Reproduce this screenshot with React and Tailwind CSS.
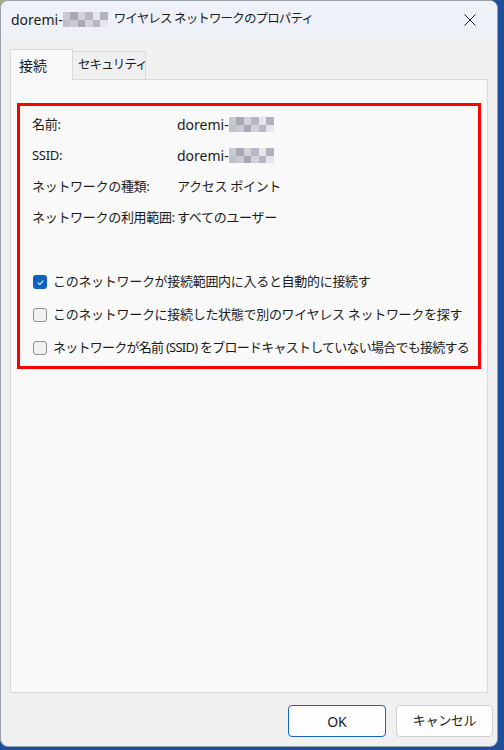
import React from "react";

const font = { fontFamily: '"Noto Sans", "Noto Sans CJK JP", sans-serif' };

// Pixelated mosaic hiding part of the network name
function Mosaic({ cols = 6, rows = 2, cell = 7 }) {
  const shades = ["#c9c9cf", "#b8b8c4", "#dcdce0", "#a9a9b6", "#e6e6ea", "#bfc0c8", "#d2d2d8", "#b0b2bc"];
  const cells = [];
  for (let r = 0; r < rows; r++) {
    for (let c = 0; c < cols; c++) {
      cells.push(
        <div key={`${r}-${c}`} style={{ background: shades[(r * 5 + c * 3) % shades.length] }} />
      );
    }
  }
  return (
    <div
      className="inline-grid align-middle"
      style={{ gridTemplateColumns: `repeat(${cols}, ${cell}px)`, gridTemplateRows: `repeat(${rows}, ${cell}px)` }}
    >
      {cells}
    </div>
  );
}

function Checkbox({ checked }) {
  if (checked) {
    return (
      <div className="w-[14px] h-[14px] rounded-[3px] bg-[#0f62c0] flex items-center justify-center shrink-0">
        <svg width="9" height="9" viewBox="0 0 10 10">
          <path d="M2 5.2 L4.2 7.3 L8.2 3" fill="none" stroke="white" strokeWidth="1.2" />
        </svg>
      </div>
    );
  }
  return <div className="w-[14px] h-[14px] rounded-[3px] border border-[#8f8f8f] bg-[#f2f2f2] shrink-0" />;
}

function InfoRow({ label, children }) {
  return (
    <div className="flex items-center h-[31px] whitespace-nowrap">
      <div className="w-[145px] text-[13px] tracking-[-0.3px]">{label}</div>
      <div className="flex items-center">{children}</div>
    </div>
  );
}

export default function App() {
  return (
    <div className="w-[504px] h-[750px] bg-[#1f4f9a] relative overflow-hidden" style={font}>
      <div className="absolute left-0 top-0 w-[60px] h-[20px] bg-[#9fae8f]" />
      <div className="absolute left-[60px] top-0 w-[400px] h-[20px] bg-[#a9b3be]" />
      <div className="absolute left-0 top-[20px] w-[4px] h-[700px] bg-[#8a8f96]" />
      <div className="relative w-[498px] h-[747px] rounded-[8px] border border-[#9aa1aa] bg-[#f0f0f0] overflow-hidden flex flex-col text-[14px] text-[#1b1b1b]">
        {/* title bar */}
        <div className="h-[37px] bg-[#eef2f8] flex items-center pl-[10px] pr-[14px] shrink-0">
          <div className="flex items-center flex-1 leading-none text-[14px] whitespace-nowrap">
            <span>doremi-</span>
            <Mosaic cols={6} rows={2} cell={7.5} />
            <span className="ml-[6px] text-[12.5px] tracking-[-0.85px]">ワイヤレス ネットワークのプロパティ</span>
          </div>
          <svg width="12" height="12" viewBox="0 0 12 12" className="mr-[7px]">
            <path d="M0.5 0.5 L11.5 11.5 M11.5 0.5 L0.5 11.5" stroke="#1b1b1b" strokeWidth="1" />
          </svg>
        </div>

        {/* tabs */}
        <div className="flex items-end pl-[9px] pt-[11px] shrink-0 whitespace-nowrap">
          <div className="w-[63px] h-[31px] bg-[#f9f9f9] border border-b-0 border-[#d9d9d9] pl-[8px] pt-[5px] relative z-10 -mb-px text-[14px]">
            接続
          </div>
          <div className="w-[73px] h-[28px] bg-[#f0f0f0] border border-b-0 border-l-0 border-[#d9d9d9] pl-[5px] pt-[4px] text-[12.5px] tracking-[-0.9px]">
            セキュリティ
          </div>
        </div>

        {/* tab panel */}
        <div className="mx-[9px] h-[614px] bg-[#f9f9f9] border border-[#d9d9d9] pt-[23px] px-[6px] shrink-0">
          <div className="h-[266px] border-[3px] border-[#ff0000] pt-[3px] pl-[12px]">
            <InfoRow label="名前:">
              <span>doremi-</span>
              <Mosaic cols={6} rows={2} cell={7.5} />
            </InfoRow>
            <InfoRow label="SSID:">
              <span>doremi-</span>
              <Mosaic cols={6} rows={2} cell={7.5} />
            </InfoRow>
            <InfoRow label="ネットワークの種類:">
              <span className="text-[13px] tracking-[-0.3px]">アクセス ポイント</span>
            </InfoRow>
            <InfoRow label="ネットワークの利用範囲:">
              <span className="text-[13px] tracking-[-0.3px]">すべてのユーザー</span>
            </InfoRow>

            <div className="mt-[41px] flex flex-col gap-[17px] pl-[1px] text-[13px] tracking-[-0.3px] whitespace-nowrap">
              <label className="flex items-center gap-[6px] h-[16px]">
                <Checkbox checked />
                <span>このネットワークが接続範囲内に入ると自動的に接続す</span>
              </label>
              <label className="flex items-center gap-[6px] h-[16px]">
                <Checkbox />
                <span>このネットワークに接続した状態で別のワイヤレス ネットワークを探す</span>
              </label>
              <label className="flex items-center gap-[6px] h-[16px]">
                <Checkbox />
                <span className="tracking-[-0.75px]">ネットワークが名前 (SSID) をブロードキャストしていない場合でも接続する</span>
              </label>
            </div>
          </div>
        </div>

        {/* buttons */}
        <div className="flex justify-end gap-[10px] pr-[4px] pt-[12px]">
          <button className="w-[98px] h-[32px] rounded-[4px] border border-[#1764c0] bg-[#fdfdfd] text-[14px]">OK</button>
          <button className="w-[97px] h-[32px] rounded-[4px] border border-[#d0d0d0] bg-[#fdfdfd] text-[13px] tracking-[-0.3px]">キャンセル</button>
        </div>
      </div>
    </div>
  );
}
